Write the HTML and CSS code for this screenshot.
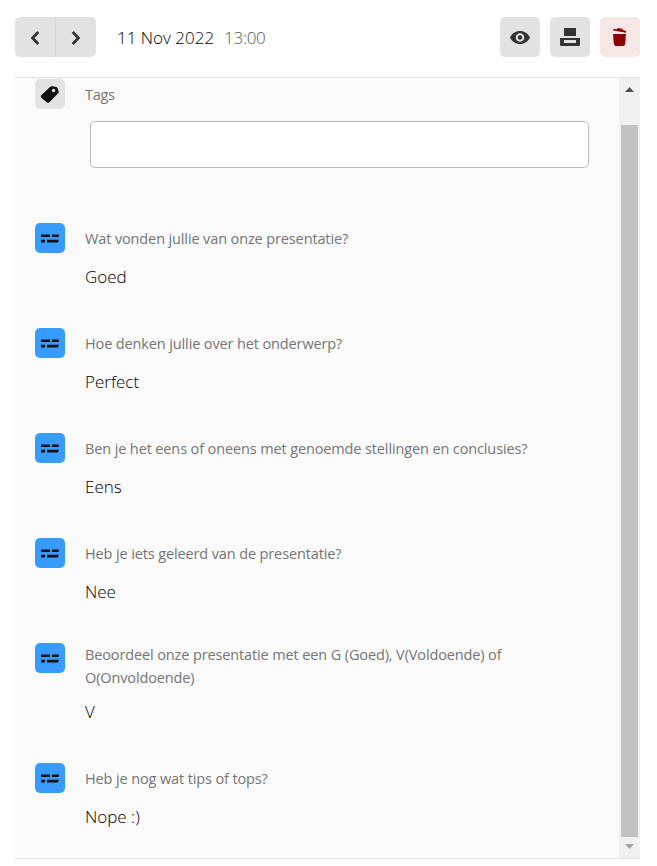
FILE: index.html
```html
<!DOCTYPE html>
<html lang="nl">
<head>
<meta charset="utf-8">
<title>11 Nov 2022</title>
<link rel="stylesheet" href="styles.css">
</head>
<body>
<svg class="defs" aria-hidden="true">
  <symbol id="lines" viewBox="0 0 18 9"><path d="M0 .5h9v2.600H0zM11.200 .5H18L17.600 3.100h-6.900zM0 5.700h4v2.800H0zM6 5.700h12l-1.200 2.800H6z"/></symbol>
</svg>
<header class="toolbar">
  <div class="pager">
    <button class="btn" aria-label="Vorige"><svg width="40" height="40" viewBox="0 0 40 40"><path class="chevron" d="M23.300 15l-5.700 6 5.700 6"/></svg></button>
    <button class="btn" aria-label="Volgende"><svg width="40" height="40" viewBox="0 0 40 40"><path class="chevron" d="M16.700 15l5.700 6-5.700 6"/></svg></button>
  </div>
  <div class="date"><span class="day">11 Nov 2022</span><span class="time">13:00</span></div>
  <div class="actions">
    <button class="btn" aria-label="Bekijken"><svg width="40" height="40" viewBox="0 0 40 40"><path fill-rule="evenodd" d="M10 20.500C12 16.300 15.700 14 20 14s8 2.300 10 6.500C28 24.700 24.300 27 20 27s-8-2.300-10-6.500zM20 16.200a4.300 4.300 0 1 0 0 8.600 4.300 4.300 0 0 0 0-8.600z"/><circle cx="20" cy="20.500" r="2.200"/></svg></button>
    <button class="btn" aria-label="Afdrukken"><svg width="40" height="40" viewBox="0 0 40 40"><path fill-rule="evenodd" d="M14 11h12v8H14zM10 21h20v6.500a1.500 1.500 0 0 1-1.500 1.500h-17a1.500 1.500 0 0 1-1.500-1.500zM14 23v3h12v-3z"/></svg></button>
    <button class="btn danger" aria-label="Verwijderen"><svg width="40" height="40" viewBox="0 0 40 40"><path d="M13 17h13l-.8 9.500q-.3 2.500-2.200 2.500h-7q-1.900 0-2.200-2.500zM13.300 12l3.700.2.600-1.200 4.900.7.200 1.200 3.300 1v1.800L13.300 13.400z"/></svg></button>
  </div>
</header>
<main class="panel">
  <div class="content">
    <section class="tags">
      <div class="icon tag"><svg width="30" height="30" viewBox="0 0 30 30"><path fill-rule="evenodd" d="M6.300 16.300L15 8q1-1 2.300-.8l4 .8q1 .2 1.300 1.200l1.100 3.300q.3 1-.5 1.800l-8.800 8.900q-1.200 1.200-2.400.2l-5.600-4.700q-1.200-1.100-.1-2.400zM18.600 9.800a1.700 1.700 0 1 0 0 3.400 1.700 1.700 0 0 0 0-3.400z"/></svg></div>
      <div class="question q-tags"><span>Tags</span></div>
      <input class="tag-input" type="text" aria-label="Tags">
    </section>
    <section class="item">
      <div class="icon"><svg width="18" height="9"><use href="#lines"/></svg></div>
      <div class="question"><span>Wat vonden jullie van onze presentatie?</span></div>
      <div class="answer">Goed</div>
    </section>
    <section class="item">
      <div class="icon"><svg width="18" height="9"><use href="#lines"/></svg></div>
      <div class="question"><span>Hoe denken jullie over het onderwerp?</span></div>
      <div class="answer">Perfect</div>
    </section>
    <section class="item">
      <div class="icon"><svg width="18" height="9"><use href="#lines"/></svg></div>
      <div class="question"><span>Ben je het eens of oneens met genoemde stellingen en conclusies?</span></div>
      <div class="answer">Eens</div>
    </section>
    <section class="item">
      <div class="icon"><svg width="18" height="9"><use href="#lines"/></svg></div>
      <div class="question"><span>Heb je iets geleerd van de presentatie?</span></div>
      <div class="answer">Nee</div>
    </section>
    <section class="item">
      <div class="icon"><svg width="18" height="9"><use href="#lines"/></svg></div>
      <div class="question"><span>Beoordeel onze presentatie met een G (Goed), V(Voldoende) of<br>O(Onvoldoende)</span></div>
      <div class="answer">V</div>
    </section>
    <section class="item">
      <div class="icon"><svg width="18" height="9"><use href="#lines"/></svg></div>
      <div class="question"><span>Heb je nog wat tips of tops?</span></div>
      <div class="answer">Nope :)</div>
    </section>
  </div>
  <div class="scrollbar">
    <svg class="up" width="9" height="5"><path d="M0 5h9L4.500 0z"/></svg>
    <div class="thumb"></div>
    <svg class="down" width="9" height="5"><path d="M0 0h9L4.500 5z"/></svg>
  </div>
</main>
</body>
</html>
```
FILE: styles.css
```css
* { box-sizing: border-box; }
body {
  margin: 0;
  padding: 17px 17px 0 15px;
  background: #fff;
  color: #000;
  font-family: "Open Sans", "Noto Sans", sans-serif;
  font-weight: 300;
}
.defs { display: none; }
svg { display: block; }
.toolbar { display: flex; height: 40px; margin-bottom: 20px; }
.btn {
  width: 40px;
  height: 40px;
  padding: 0;
  border: 0;
  border-radius: 5px;
  background: #e2e2e2;
  fill: #333;
}
.chevron { fill: none; stroke: #333; stroke-width: 2.8; }
.pager { display: flex; width: 81px; border-radius: 5px; overflow: hidden; }
.pager .btn { border-radius: 0; }
.pager .btn:first-child { width: 41px; border-right: 1px solid #d5d5d5; }
.date {
  display: flex;
  gap: 10px;
  margin-left: 21px;
  font-size: 17px;
  line-height: 41px;
  white-space: nowrap;
}
.time { color: #555; letter-spacing: -.3px; }
.actions { display: flex; gap: 10px; margin-left: auto; }
.danger { background: #f6e6e6; fill: #8b0000; }
.panel {
  display: flex;
  height: 782px;
  border-top: 1px solid #e2e2e2;
  border-bottom: 1px solid #e2e2e2;
  background: #fafafa;
}
.content { flex: 1; padding: 1px 20px 0; }
.tags, .item { display: grid; grid-template-columns: 30px 1fr; column-gap: 20px; align-content: start; }
.tags { height: 144px; }
.icon {
  display: flex;
  align-items: center;
  justify-content: center;
  width: 30px;
  height: 30px;
  border-radius: 5px;
  background: #389bff;
  fill: #111;
}
.tag { background: #e2e2e2; }
.question {
  display: flex;
  align-items: center;
  min-height: 31px;
  margin-bottom: -1px;
  padding-top: 1px;
  color: #757575;
  font-size: 14.5px;
  font-weight: 400;
  letter-spacing: -.125px;
  line-height: 22.5px;
  white-space: nowrap;
}
.q-tags { letter-spacing: -.3px; }
.tag-input {
  grid-column: 2;
  width: 499px;
  height: 47px;
  margin: 12px 0 0 5px;
  border: 1px solid #bbb;
  border-radius: 5px;
  background: #fff;
}
.answer {
  grid-column: 2;
  padding: 10px 0 38px;
  font-size: 17px;
  letter-spacing: 0;
  line-height: 27px;
}
.scrollbar {
  display: flex;
  flex-direction: column;
  align-items: center;
  width: 21px;
  padding: 9px 0;
  background: #f0f0f0;
}
.up { fill: #505050; }
.down { margin-top: 7px; fill: #a3a3a3; }
.thumb { width: 17px; height: 712px; margin-top: 33px; background: #c1c1c1; }
```
